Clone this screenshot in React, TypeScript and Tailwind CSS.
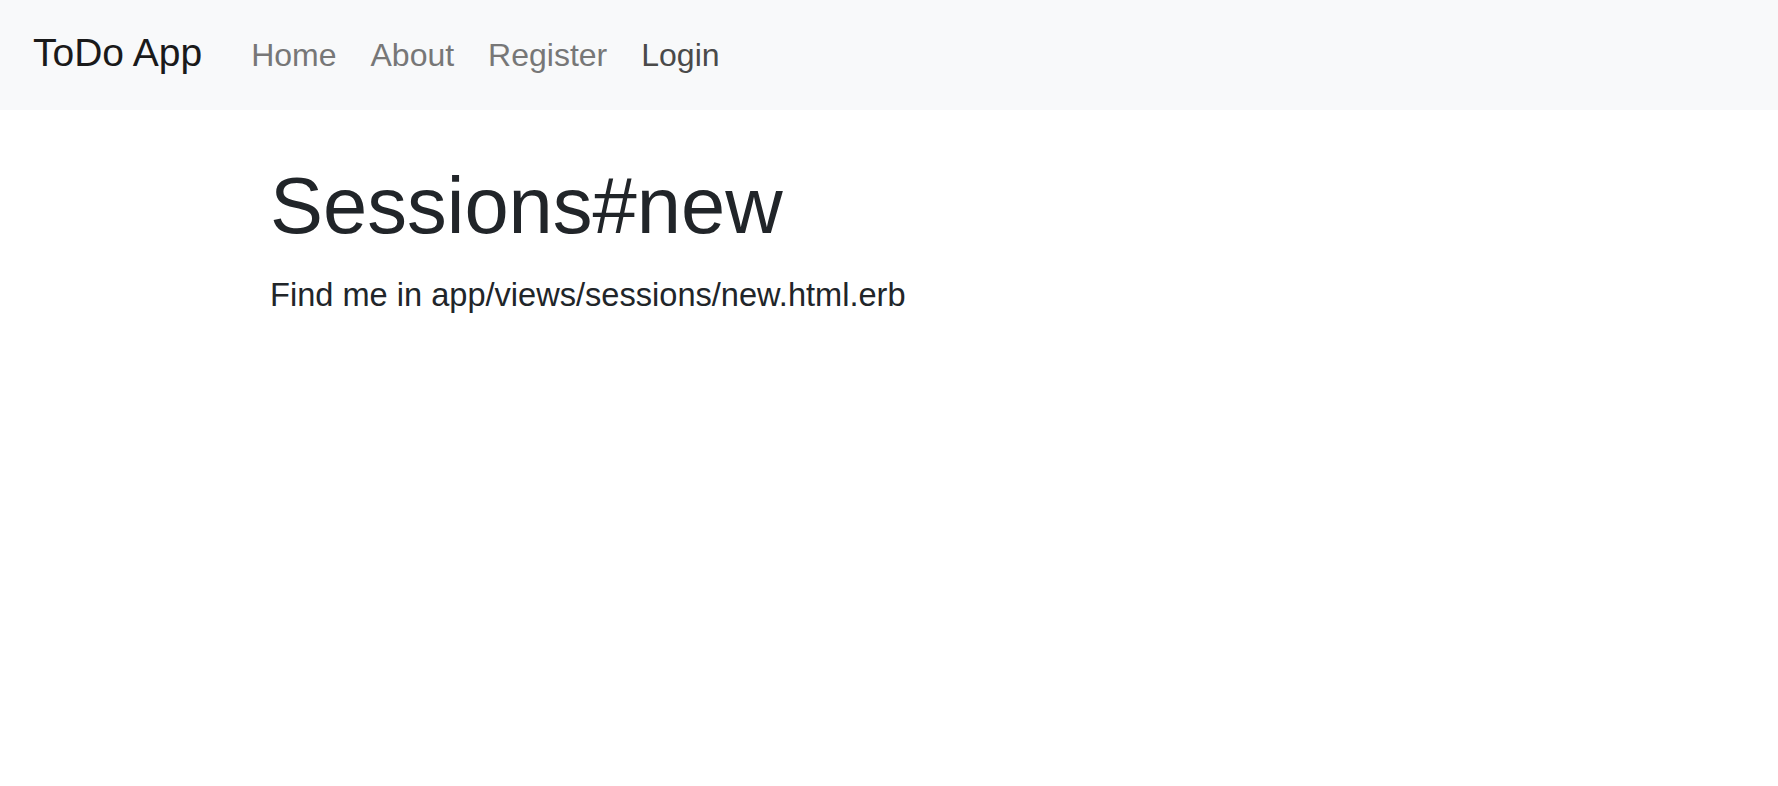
export default function App() {
  const links = [
    { label: 'Home', active: false },
    { label: 'About', active: false },
    { label: 'Register', active: false },
    { label: 'Login', active: true },
  ];

  return (
    <div className="min-h-screen bg-white font-['Liberation_Sans',Arial,sans-serif] text-[#212529]">
      <nav className="h-[110px] bg-[#f8f9fa]">
        <div className="flex items-baseline pl-[33px] pt-[34px]">
          <a href="#" className="mr-[49px] text-[39px] leading-[38px] text-[#1a1a1a]">
            ToDo App
          </a>
          <div className="flex items-baseline gap-[34px]">
            {links.map((link) => (
              <a
                key={link.label}
                href="#"
                className={
                  link.active
                    ? 'text-[32px] leading-[32px] text-[#4a4a4a]'
                    : 'text-[32px] leading-[32px] text-[#777777]'
                }
              >
                {link.label}
              </a>
            ))}
          </div>
        </div>
      </nav>

      <main className="pl-[270px] pt-[48px]">
        <h1 className="text-[79.5px] leading-[1.2] font-medium">Sessions#new</h1>
        <p className="mt-[18px] text-[32.6px] leading-[48px]">
          Find me in app/views/sessions/new.html.erb
        </p>
      </main>
    </div>
  );
}
